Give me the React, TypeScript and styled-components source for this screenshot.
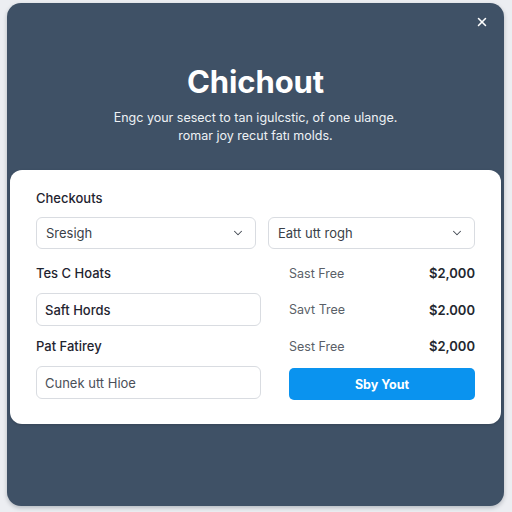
import React from "react";
import styled, { createGlobalStyle } from "styled-components";
import { X, ChevronDown } from "lucide-react";

const Global = createGlobalStyle`
  html, body {
    margin: 0;
    padding: 0;
    background: #eceef2;
  }
  body {
    font-family: Inter, "Liberation Sans", Arial, sans-serif;
  }
`;

const Page = styled.div`
  width: 512px;
  height: 512px;
  padding: 3px 8px 6px 7px;
  box-sizing: border-box;
`;

const Panel = styled.div`
  position: relative;
  height: 503px;
  background: #3f5166;
  border-radius: 14px;
  padding: 60px 3px 0;
  box-sizing: border-box;
  box-shadow: 0 2px 4px rgba(20, 30, 45, 0.25);
`;

const CloseButton = styled.button`
  position: absolute;
  top: 9px;
  right: 12px;
  width: 20px;
  height: 20px;
  padding: 0;
  border: 0;
  background: transparent;
  color: #ffffff;
  display: flex;
  align-items: center;
  justify-content: center;
`;

const Title = styled.h1`
  margin: 0;
  text-align: center;
  color: #ffffff;
  font-size: 31px;
  font-weight: 700;
  line-height: 38px;
  letter-spacing: -0.1px;
`;

const Subtitle = styled.p`
  margin: 8px 0 0;
  text-align: center;
  color: #eef1f5;
  font-size: 12.5px;
  line-height: 18px;
`;

const Card = styled.div`
  margin-top: 25px;
  background: #ffffff;
  border-radius: 12px;
  padding: 20px 26px 25px;
  box-shadow: 0 1px 3px rgba(0, 0, 0, 0.15);
`;

const Heading = styled.div`
  font-size: 13px;
  font-weight: 500;
  color: #1f2430;
  line-height: 16px;
`;

const SelectRow = styled.div`
  display: grid;
  grid-template-columns: 220px 1fr;
  gap: 12px;
  margin-top: 11px;
`;

const Select = styled.div`
  height: 32px;
  border: 1px solid #d9dce1;
  border-radius: 6px;
  box-sizing: border-box;
  display: flex;
  align-items: center;
  justify-content: space-between;
  padding: 0 10px 0 9px;
  font-size: 13px;
  color: #3a3f48;
`;

const Lower = styled.div`
  display: grid;
  grid-template-columns: 225px 1fr;
  grid-template-rows: 24px 33px 24px 33px;
  column-gap: 28px;
  row-gap: 8px;
  margin-top: 12px;
`;

const Label = styled.div`
  display: flex;
  align-items: center;
  font-size: 13px;
  font-weight: 500;
  color: #1f2430;
`;

const Input = styled.div<{ $muted?: boolean }>`
  border: 1px solid #d9dce1;
  border-radius: 6px;
  box-sizing: border-box;
  display: flex;
  align-items: center;
  padding: 0 8px;
  font-size: 13px;
  font-weight: ${(p) => (p.$muted ? 400 : 500)};
  color: ${(p) => (p.$muted ? "#4a4f58" : "#1f2430")};
`;

const PriceRow = styled.div`
  display: flex;
  align-items: center;
  justify-content: space-between;
`;

const PriceName = styled.span`
  font-size: 12.5px;
  color: #5a5f68;
`;

const Price = styled.span`
  font-size: 13px;
  font-weight: 600;
  color: #23272f;
`;

const PayButton = styled.button`
  height: 32px;
  margin-top: 2px;
  border: 0;
  border-radius: 5px;
  background: #0a93ef;
  color: #ffffff;
  font-family: inherit;
  font-size: 12.5px;
  font-weight: 700;
`;

const prices = [
  { name: "Sast Free", amount: "$2,000" },
  { name: "Savt Tree", amount: "$2.000" },
  { name: "Sest Free", amount: "$2,000" },
];

const App = () => {
  return (
    <Page>
      <Global />
      <Panel>
        <CloseButton aria-label="Close">
          <X size={14} strokeWidth={2.6} />
        </CloseButton>
        <Title>Chichout</Title>
        <Subtitle>
          Engc your sesect to tan igulcstic, of one ulange.
          <br />
          romar joy recut fatı molds.
        </Subtitle>
        <Card>
          <Heading>Checkouts</Heading>
          <SelectRow>
            <Select>
              Sresigh
              <ChevronDown size={14} strokeWidth={1.8} color="#444a54" />
            </Select>
            <Select>
              Eatt utt rogh
              <ChevronDown size={14} strokeWidth={1.8} color="#444a54" />
            </Select>
          </SelectRow>
          <Lower>
            <Label>Tes C Hoats</Label>
            <PriceRow>
              <PriceName>{prices[0].name}</PriceName>
              <Price>{prices[0].amount}</Price>
            </PriceRow>
            <Input>Saft Hords</Input>
            <PriceRow>
              <PriceName>{prices[1].name}</PriceName>
              <Price>{prices[1].amount}</Price>
            </PriceRow>
            <Label>Pat Fatirey</Label>
            <PriceRow>
              <PriceName>{prices[2].name}</PriceName>
              <Price>{prices[2].amount}</Price>
            </PriceRow>
            <Input $muted>Cunek utt Hioe</Input>
            <PayButton>Sby Yout</PayButton>
          </Lower>
        </Card>
      </Panel>
    </Page>
  );
};

export default App;
